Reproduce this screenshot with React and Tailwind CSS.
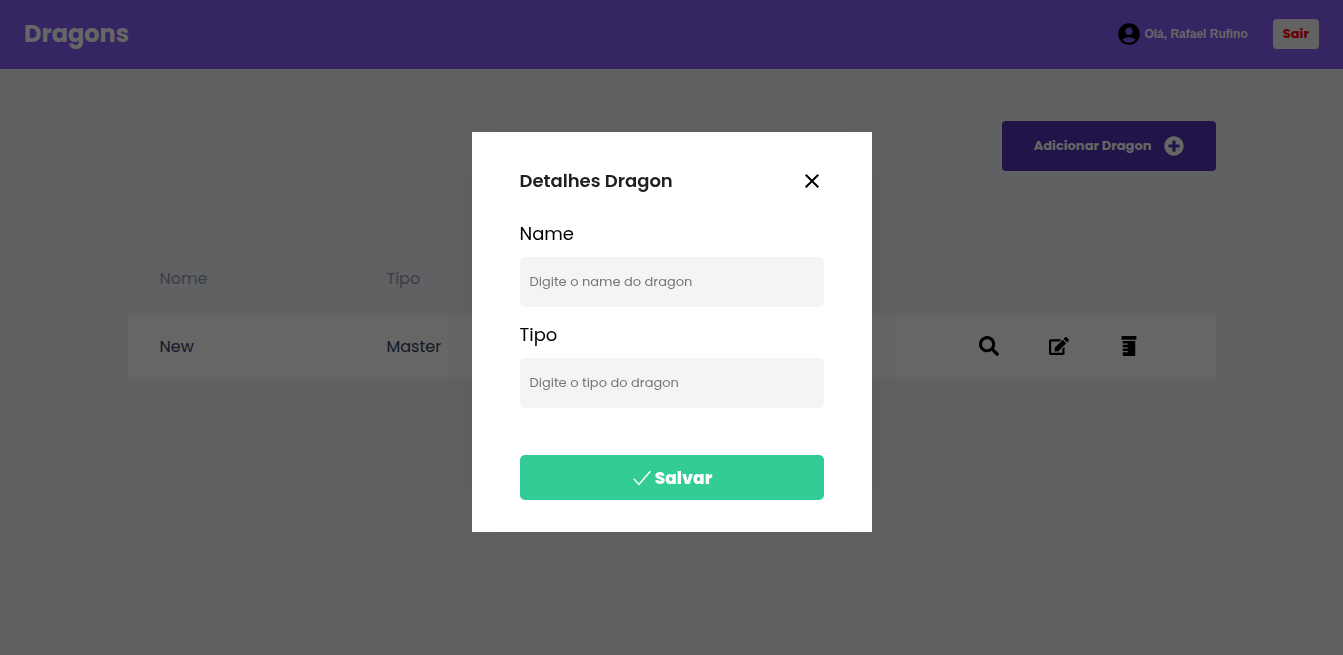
import React from "react";
import { MdAccountCircle, MdClose } from "react-icons/md";
import { FaSearch, FaEdit, FaPlusCircle, FaPrescriptionBottle } from "react-icons/fa";

function CheckIcon() {
  return (
    <svg viewBox="0 0 20 16" className="h-4 w-5" fill="none" stroke="currentColor" strokeWidth="1.4" aria-hidden="true">
      <path d="M2.8 8.8 L8 14.5 L19.3 1.2" />
    </svg>
  );
}

function Header() {
  return (
    <header className="flex items-center justify-between bg-[#845ef7] px-6 pt-[19px] pb-5">
      <h1 className="text-2xl leading-[30px] font-bold text-white">Dragons</h1>
      <div className="flex items-center">
        <MdAccountCircle className="h-[26px] w-[26px] text-black" />
        <span className="mr-[25px] ml-0.5 font-['Liberation_Sans',Arial,sans-serif] text-xs font-bold text-white">
          Olá, Rafael Rufino
        </span>
        <button type="button" className="h-[30px] rounded bg-[#f4f4f4] px-2.5 text-[13px] leading-5 font-bold text-[#ff0000]">
          Sair
        </button>
      </div>
    </header>
  );
}

const dragons = [{ name: "New", type: "Master" }];

function DragonTable() {
  return (
    <table className="w-full border-separate border-spacing-x-0 border-spacing-y-2">
      <thead>
        <tr className="text-left text-[#969cb2]">
          <th className="w-[227px] px-8 py-4 font-normal">Nome</th>
          <th className="px-8 py-4 font-normal">Tipo</th>
          <th aria-label="Ações" />
        </tr>
      </thead>
      <tbody>
        {dragons.map((dragon) => (
          <tr key={dragon.name} className="h-[62px] bg-white text-[#363f5f]">
            <td className="px-8 pt-0.5">{dragon.name}</td>
            <td className="px-8 pt-0.5">{dragon.type}</td>
            <td className="pr-[77px]">
              <div className="flex items-center justify-end gap-[50px] text-black">
                <button type="button" aria-label="Ver">
                  <FaSearch className="h-5 w-5" />
                </button>
                <button type="button" aria-label="Editar">
                  <FaEdit className="h-5 w-5" />
                </button>
                <button type="button" aria-label="Excluir">
                  <FaPrescriptionBottle className="h-5 w-5" />
                </button>
              </div>
            </td>
          </tr>
        ))}
      </tbody>
    </table>
  );
}

function Field({ id, label, placeholder }) {
  return (
    <div className="flex flex-col gap-[9px]">
      <label htmlFor={id} className="text-lg leading-7 text-black">
        {label}
      </label>
      <input
        id={id}
        type="text"
        placeholder={placeholder}
        className="h-[50px] w-full rounded-[5px] bg-[#f4f4f4] px-2.5 text-[13px] leading-5 placeholder:text-[#757575] focus:outline-none"
      />
    </div>
  );
}

function DragonModal() {
  return (
    <div className="fixed inset-0 flex items-center justify-center bg-black/60 pt-[9px]">
      <form
        role="dialog"
        aria-labelledby="modal-title"
        onSubmit={(event) => event.preventDefault()}
        className="w-full max-w-[400px] bg-white px-12 pt-[35px] pb-8 shadow-[0_0_60px_rgba(0,0,0,0.05)]"
      >
        <div className="mb-[25px] flex items-center justify-between">
          <h2 id="modal-title" className="text-lg leading-7 font-semibold text-[#202024]">
            Detalhes Dragon
          </h2>
          <button type="button" aria-label="Fechar" className="text-black">
            <MdClose className="h-6 w-6" />
          </button>
        </div>
        <div className="flex flex-col gap-3.5">
          <Field id="name" label="Name" placeholder="Digite o name do dragon" />
          <Field id="type" label="Tipo" placeholder="Digite o tipo do dragon" />
        </div>
        <button
          type="submit"
          className="mt-[47px] flex h-[45px] w-full items-center justify-center gap-1 rounded-[5px] bg-[#33cc95] text-[17px] leading-7 font-extrabold text-white"
        >
          <CheckIcon />
          Salvar
        </button>
      </form>
    </div>
  );
}

export default function App() {
  return (
    <div className="min-h-screen bg-[#f0f2f5] font-['Poppins','Inter',sans-serif]">
      <Header />
      <main className="mx-auto max-w-[1120px] px-4 pt-[52px]">
        <div className="mb-[72px] flex justify-end">
          <button
            type="button"
            className="flex h-[50px] items-center gap-3 rounded bg-[#5232b4] px-8 text-[13px] leading-5 font-bold text-white"
          >
            Adicionar Dragon
            <FaPlusCircle className="h-5 w-5" />
          </button>
        </div>
        <DragonTable />
      </main>
      <DragonModal />
    </div>
  );
}
